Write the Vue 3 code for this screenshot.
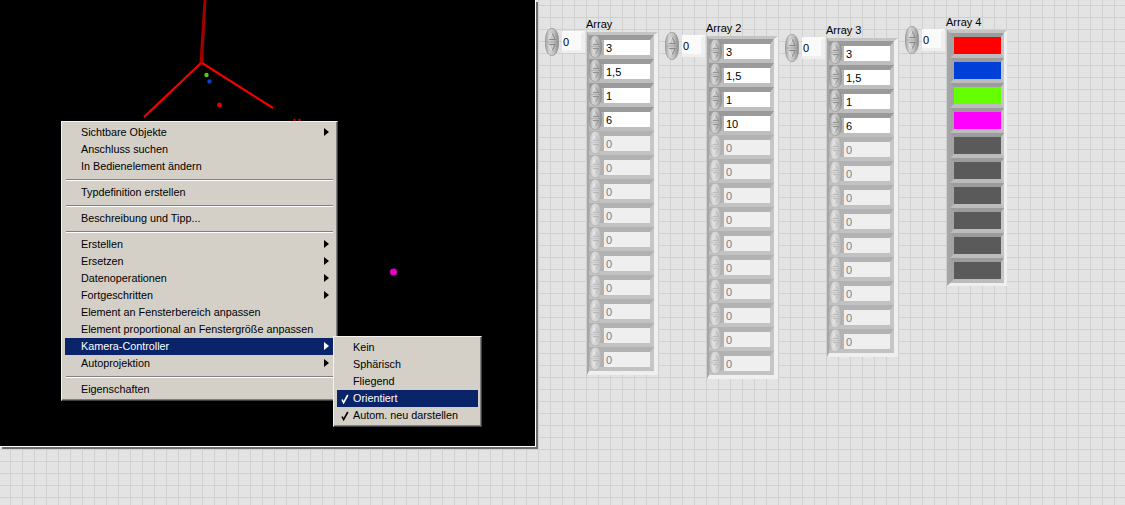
<template>
  <div class="page">
    <svg class="defs" width="0" height="0">
      <defs>
        <linearGradient id="spinFill" x1="0" x2="1" y1="0" y2="0">
          <stop offset="0" stop-color="#a4a4a4" />
          <stop offset="0.3" stop-color="#d4d4d4" />
          <stop offset="0.65" stop-color="#bebebe" />
          <stop offset="1" stop-color="#8a8a8a" />
        </linearGradient>
        <linearGradient id="spinFillOff" x1="0" x2="1" y1="0" y2="0">
          <stop offset="0" stop-color="#bcbcbc" />
          <stop offset="0.3" stop-color="#dedede" />
          <stop offset="0.65" stop-color="#d0d0d0" />
          <stop offset="1" stop-color="#b0b0b0" />
        </linearGradient>
        <symbol id="spin" viewBox="0 0 14 28" preserveAspectRatio="none">
          <path d="M7 .3C11 .3 13.7 6 13.7 14S11 27.7 7 27.7 .3 22 .3 14 3 .3 7 .3Z" fill="url(#spinFill)" stroke="#8a8a8a" stroke-width=".6" />
          <path d="M1.5 14H12.5" stroke="#999" stroke-width=".6" />
          <path d="M7 5L10.2 11.5H3.8Z" fill="#c8c8c8" />
          <path d="M7 5L10.2 11.5H3.8" stroke="#6c6c6c" stroke-width=".7" fill="none" />
          <path d="M3.8 11.5L7 5" stroke="#f2f2f2" stroke-width=".7" fill="none" />
          <path d="M7 23L10.2 16.5H3.8Z" fill="#c8c8c8" />
          <path d="M3.8 16.5H10.2L7 23" stroke="#6c6c6c" stroke-width=".7" fill="none" />
          <path d="M3.8 16.5L7 23" stroke="#f2f2f2" stroke-width=".7" fill="none" />
        </symbol>
        <symbol id="spin-off" viewBox="0 0 14 28" preserveAspectRatio="none">
          <path d="M7 .3C11 .3 13.7 6 13.7 14S11 27.7 7 27.7 .3 22 .3 14 3 .3 7 .3Z" fill="url(#spinFillOff)" stroke="#aaa" stroke-width=".6" />
          <path d="M1.5 14H12.5" stroke="#b4b4b4" stroke-width=".6" />
          <path d="M7 5L10.2 11.5H3.8Z" fill="#d6d6d6" />
          <path d="M7 5L10.2 11.5H3.8" stroke="#a4a4a4" stroke-width=".7" fill="none" />
          <path d="M3.8 11.5L7 5" stroke="#f4f4f4" stroke-width=".7" fill="none" />
          <path d="M7 23L10.2 16.5H3.8Z" fill="#d6d6d6" />
          <path d="M3.8 16.5H10.2L7 23" stroke="#a4a4a4" stroke-width=".7" fill="none" />
          <path d="M3.8 16.5L7 23" stroke="#f4f4f4" stroke-width=".7" fill="none" />
        </symbol>
      </defs>
    </svg>

    <div class="panel">
      <svg class="scene" width="535" height="446" viewBox="0 0 535 446">
        <polygon points="203.5,0 206.5,0 203,63 199.5,63" fill="#a00000" />
        <path d="M201 63L144 117" stroke="#f40000" stroke-width="2.2" fill="none" />
        <path d="M202 63L273 108" stroke="#f40000" stroke-width="2.2" fill="none" />
        <circle cx="206.5" cy="75" r="2.2" fill="#55cc11" />
        <circle cx="209.5" cy="81.5" r="2.2" fill="#0b3fc0" />
        <circle cx="219.5" cy="105" r="2.4" fill="#e00000" />
        <circle cx="393.5" cy="272" r="3.6" fill="#e000c8" />
        <path d="M294 119L295 121M299 119L300 121" stroke="#d00000" stroke-width="2" />
      </svg>
    </div>

    <div
      v-for="arr in arrays"
      :key="arr.label"
      class="array"
      :style="{ left: arr.x + 'px', top: arr.y + 'px' }"
    >
      <div class="index">
        <svg class="spinner"><use href="#spin" /></svg>
        <div class="index-input">0</div>
      </div>
      <div class="body">
        <div class="label">{{ arr.label }}</div>
        <div class="frame" :class="{ colors: arr.colors }">
          <template v-if="arr.colors">
            <div v-for="(c, i) in arr.colors" :key="i" class="swatch-row">
              <div class="swatch" :style="{ background: c }"></div>
            </div>
          </template>
          <template v-else>
            <div
              v-for="(v, i) in rowsOf(arr)"
              :key="i"
              class="row"
              :class="{ off: v === null }"
            >
              <svg class="row-spinner"><use :href="v === null ? '#spin-off' : '#spin'" /></svg>
              <div class="value">{{ v === null ? '0' : v }}</div>
            </div>
          </template>
        </div>
      </div>
    </div>

    <div class="menu main-menu">
      <template v-for="(item, i) in mainMenu" :key="i">
        <div v-if="item === '-'" class="sep"></div>
        <div v-else class="item" :class="{ active: item.active }">
          <span>{{ item.text }}</span>
          <span v-if="item.sub" class="arrow"></span>
        </div>
      </template>
    </div>

    <div class="menu sub-menu">
      <div v-for="item in subMenu" :key="item.text" class="item sub-item" :class="{ active: item.active }">
        <svg v-if="item.checked" class="check" width="8" height="10" viewBox="0 0 8 10">
          <path d="M1 5.5L2.6 8.6L6.8 1" fill="none" stroke="currentColor" stroke-width="1.6" />
        </svg>
        <span>{{ item.text }}</span>
      </div>
    </div>
  </div>
</template>

<script setup>
const arrays = [
  { label: 'Array', x: 545, y: 17, values: ['3', '1,5', '1', '6'], rows: 14 },
  { label: 'Array 2', x: 665, y: 21, values: ['3', '1,5', '1', '10'], rows: 14 },
  { label: 'Array 3', x: 785, y: 23, values: ['3', '1,5', '1', '6'], rows: 13 },
  {
    label: 'Array 4',
    x: 905,
    y: 15,
    colors: ['#ff0000', '#0040d8', '#66ff00', '#ff00ff', ...Array(6).fill('#5a5a5a')]
  }
];

function rowsOf(arr) {
  const out = [];
  for (let i = 0; i < arr.rows; i++) {
    out.push(i < arr.values.length ? arr.values[i] : null);
  }
  return out;
}

const mainMenu = [
  { text: 'Sichtbare Objekte', sub: true },
  { text: 'Anschluss suchen' },
  { text: 'In Bedienelement ändern' },
  '-',
  { text: 'Typdefinition erstellen' },
  '-',
  { text: 'Beschreibung und Tipp...' },
  '-',
  { text: 'Erstellen', sub: true },
  { text: 'Ersetzen', sub: true },
  { text: 'Datenoperationen', sub: true },
  { text: 'Fortgeschritten', sub: true },
  { text: 'Element an Fensterbereich anpassen' },
  { text: 'Element proportional an Fenstergröße anpassen' },
  { text: 'Kamera-Controller', sub: true, active: true },
  { text: 'Autoprojektion', sub: true },
  '-',
  { text: 'Eigenschaften' }
];

const subMenu = [
  { text: 'Kein' },
  { text: 'Sphärisch' },
  { text: 'Fliegend' },
  { text: 'Orientiert', checked: true, active: true },
  { text: 'Autom. neu darstellen', checked: true }
];
</script>

<style scoped>
.page {
  position: relative;
  width: 1125px;
  height: 505px;
  overflow: hidden;
  font-family: "Liberation Sans", Arial, sans-serif;
  font-size: 11px;
  color: #000;
  background-color: #e3e3e3;
  background-image:
    linear-gradient(to right, #d0d0d0 1px, transparent 1px),
    linear-gradient(to bottom, #d0d0d0 1px, transparent 1px);
  background-size: 12px 12px;
  background-position: 10px 5px;
}
.defs {
  position: absolute;
}
.panel {
  width: 535px;
  height: 446px;
  background: #000;
  border-right: 1px solid #fff;
  border-bottom: 1px solid #fff;
  box-shadow: 2px 2px 0 #6e6e6e;
}
.scene {
  display: block;
}
.array {
  position: absolute;
  display: flex;
}
.index {
  display: flex;
  align-items: flex-start;
  gap: 3px;
  width: 42px;
  padding-top: 11px;
  box-sizing: border-box;
}
.spinner {
  width: 14px;
  height: 28px;
  flex: none;
}
.index-input {
  width: 18px;
  height: 16px;
  margin-top: 3px;
  line-height: 17px;
  padding-left: 1px;
  flex: none;
  background: #fafafa;
  border-top: 3px solid transparent;
  border-right: 4px solid #efefef;
  border-bottom: 3px solid #efefef;
}
.label {
  height: 15px;
  line-height: 15px;
  margin-left: -1px;
  white-space: nowrap;
}
.frame {
  width: 71px;
  box-sizing: border-box;
  background: #b0b0b0;
  border-top: 3px solid #c4c4c4;
  border-left: 2px solid #a6a6a6;
  border-right: 4px solid #efefef;
  border-bottom: 4px solid #efefef;
}
.row {
  display: flex;
  height: 24px;
  box-sizing: border-box;
  border-top: 5px solid #9a9a9a;
  border-right: 4px solid #c6c6c6;
  border-bottom: 4px solid #bebebe;
  background: #b4b4b4;
}
.row.off {
  border-top-color: #b2b2b2;
  border-bottom-color: #c2c2c2;
}
.row-spinner {
  width: 13px;
  height: 23px;
  flex: none;
  margin-top: -5px;
  margin-right: 2px;
  position: relative;
  z-index: 1;
}
.value {
  flex: 1;
  background: #fff;
  padding-left: 2px;
  line-height: 16px;
}
.row.off .value {
  background: #efefef;
  color: #808080;
}
.frame.colors {
  width: 60px;
  border-left-width: 3px;
  border-right-width: 3px;
  border-bottom-width: 3px;
  background: #bcbcbc;
}
.swatch-row {
  height: 25px;
  box-sizing: border-box;
  border-top: 4px solid #9c9c9c;
  border-left: 4px solid #a4a4a4;
  border-right: 3px solid #c6c6c6;
  border-bottom: 4px solid #bcbcbc;
}
.swatch {
  height: 100%;
}
.menu {
  position: absolute;
  box-sizing: border-box;
  background: #d4d0c8;
  padding: 2px 3px;
  font-size: 10.8px;
  border: 1px solid;
  border-color: #f4f3ef #404040 #404040 #f4f3ef;
  box-shadow: inset -1px -1px 0 #808080;
}
.main-menu {
  left: 61px;
  top: 121px;
  width: 277px;
  height: 280px;
}
.sub-menu {
  left: 333px;
  top: 336px;
  width: 149px;
  height: 91px;
}
.item {
  display: flex;
  align-items: center;
  justify-content: space-between;
  height: 17px;
  box-sizing: border-box;
  padding: 0 5px 2px 16px;
  white-space: nowrap;
}
.item.active {
  background: #0a246a;
  color: #fff;
}
.arrow {
  width: 0;
  height: 0;
  margin-top: 1px;
  border-left: 5px solid currentColor;
  border-top: 4px solid transparent;
  border-bottom: 4px solid transparent;
}
.sep {
  height: 2px;
  margin: 4px 1px 3px;
  background: #fff;
  border-top: 1px solid #808080;
  box-sizing: border-box;
}
.sub-item {
  position: relative;
  justify-content: flex-start;
}
.check {
  position: absolute;
  left: 4px;
  top: 4px;
}
</style>
